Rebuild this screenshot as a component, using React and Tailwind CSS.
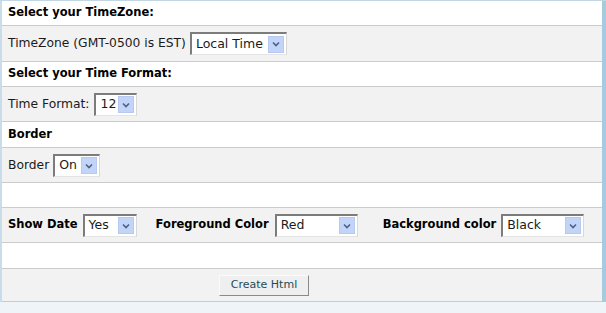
import React from "react";

const font = { fontFamily: '"DejaVu Sans", Verdana, sans-serif' };

function Arrow() {
  return (
    <span className="ml-auto flex h-[17px] w-[16px] items-center justify-center border border-[#b7c9ef] bg-[#c3d4f9]">
      <svg width="8" height="6" viewBox="0 0 8 6">
        <path d="M1 1.5 L4 4.5 L7 1.5" fill="none" stroke="#4d6185" strokeWidth="1.6" />
      </svg>
    </span>
  );
}

function FakeSelect({ value, width, className = "" }) {
  return (
    <span
      className={`inline-flex h-[23px] items-center border-t-2 border-l-2 border-r border-b border-t-[#7c7c7c] border-l-[#7c7c7c] border-r-[#d8d8d8] border-b-[#e4e4e4] bg-white pl-[4px] pr-[2px] text-[12.5px] text-[#1a1a1a] ${className}`}
      style={{ width }}
    >
      <span>{value}</span>
      <Arrow />
    </span>
  );
}

function HeadRow({ children, h = "h-[25px]" }) {
  return (
    <div className={`flex ${h} items-center border-b border-[#cbcbcb] bg-white pl-[6px] text-[11.5px] font-bold text-black`}>
      {children}
    </div>
  );
}

function FieldRow({ children, h = "h-[35px]", gap = "gap-[4px]" }) {
  return (
    <div className={`flex ${h} items-center ${gap} border-b border-[#cbcbcb] bg-[#f2f2f2] pl-[6px] text-[12.3px] text-[#1a1a1a]`}>
      {children}
    </div>
  );
}

export default function App() {
  return (
    <div className="h-[313px] w-[606px] overflow-hidden bg-[#eff4f8]" style={font}>
      <div className="flex border-t border-[#c3d6e4]">
        <div className="w-[2px] bg-[#c9dceb]" />
        <div className="w-[600px]">
          <HeadRow>Select your TimeZone:</HeadRow>
          <FieldRow h="h-[36px]">
            <span>TimeZone (GMT-0500 is EST)</span>
            <FakeSelect value="Local Time" width={97} />
          </FieldRow>
          <HeadRow>Select your Time Format:</HeadRow>
          <FieldRow gap="gap-[5px]">
            <span>Time Format:</span>
            <FakeSelect value="12" width={43} />
          </FieldRow>
          <HeadRow h="h-[26px]">Border</HeadRow>
          <FieldRow>
            <span>Border</span>
            <FakeSelect value="On" width={47} />
          </FieldRow>
          <HeadRow>{""}</HeadRow>
          <FieldRow gap="gap-0">
            <span className="text-[11.5px] font-bold text-black">Show Date</span>
            <FakeSelect value="Yes" width={54} className="ml-[5px]" />
            <span className="ml-[19px] text-[11.5px] font-bold text-black">Foreground Color</span>
            <FakeSelect value="Red" width={83} className="ml-[6px]" />
            <span className="ml-[25px] text-[11.5px] font-bold text-black">Background color</span>
            <FakeSelect value="Black" width={83} className="ml-[5px]" />
          </FieldRow>
          <HeadRow h="h-[26px]">{""}</HeadRow>
          <div className="flex h-[33px] items-center border-b border-[#cbcbcb] bg-[#f2f2f2] pl-[217px]">
            <span className="flex h-[21px] w-[90px] items-center justify-center border border-t-[#fafafa] border-l-[#fafafa] border-r-[#8a8a8a] border-b-[#8a8a8a] bg-[#efefef] text-[11px] text-[#1f4b57]">
              Create Html
            </span>
          </div>
        </div>
        <div className="w-[4px] bg-[#a9c9de]" />
      </div>
    </div>
  );
}
